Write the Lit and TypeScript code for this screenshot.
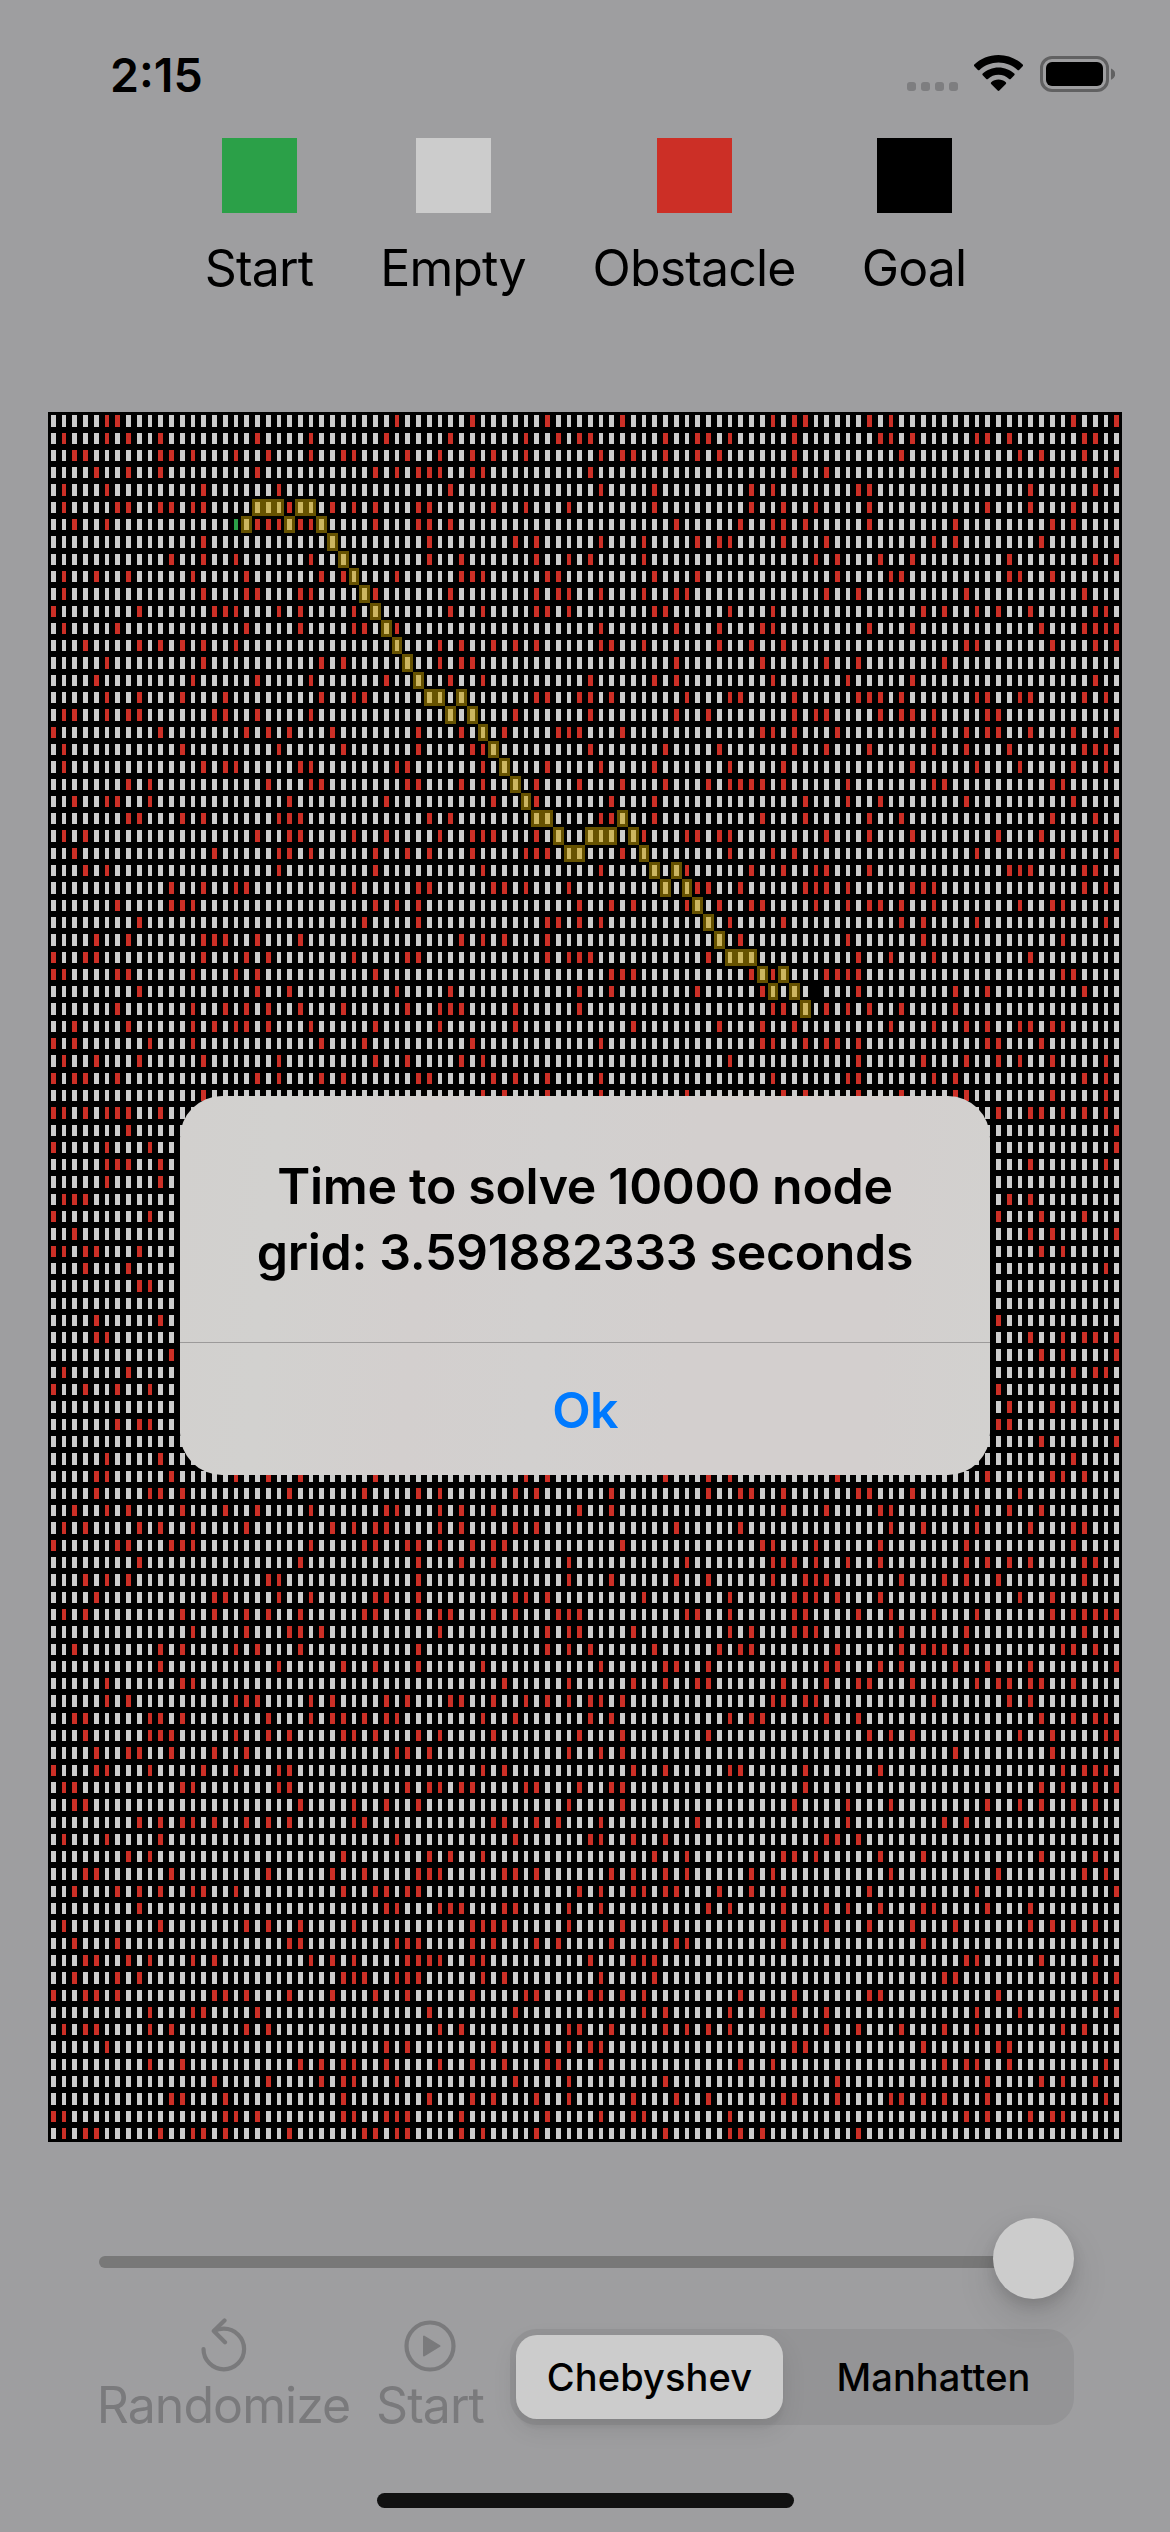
import { LitElement, html, css, svg } from "lit";
import { customElement, property } from "lit/decorators.js";

const SIZE = 100;
const PITCH_X = 10.74;
const PITCH_Y = 17.3;
const TOP_OFFSET = 0.25;
const BORDER = 3;

/* Obstacle columns, one line per grid row. */
const OBSTACLES = `5 6 32 39 46 53 67 69 70 76 78 95 99
1 5 7 10 19 24 31 37 44 47 49 50 57 60 61 63 69 77 78 80 86 87 89 96 97
2 3 10 11 13 17 20 24 27 28 33 36 39 41 44 51 53 54 57 60 62 69 79 90 92 96
4 7 10 19 30 32 34 35 36 39 40 50 69 72 99
1 5 14 21 37 51 56 65 67 75 76 91 97
1 6 7 10 11 13 14 22 26 28 30 34 35 41 44 48 56 65 68 71 76 87 91 95
2 5 19 20 21 23 24 30 34 35 37 58 64 67 68 70 76 84 93 95
14 35 43 45 51 55 60 62 63 68 72 82 84 92
11 14 17 24 35 38 45 48 50 55 71 73 77 80 89 97 99
1 4 7 13 18 25 27 32 38 39 40 46 47 56 60 73 78 79 89 90 93
1 14 18 19 23 24 30 37 45 47 48 51 55 58 59 72 75 85 96
0 8 15 16 17 21 23 28 37 40 45 46 48 56 57 63 67 81 83 86 88 91 97 98
1 6 18 23 28 29 32 51 58 62 66 67 76 80 92 96 97 98 99
3 8 10 12 14 17 36 38 41 43 45 51 52 55 62 65 68 85 86 93 97 99
5 14 25 27 36 38 39 58 66 72 75 83
4 13 19 24 31 37 40 50 56 58 67 74 80 97
5 8 12 16 25 28 29 45 46 49 50 52 59 63 64 69 75 76 77 79 86 87 90 91 96 98
1 2 5 7 8 15 16 19 24 43 50 58 61 69 71 72 77 79 80 82 87 88
0 10 18 20 22 26 34 38 42 47 48 49 53 66 67 69 73 82 85 87 88 91 95 99
1 12 21 27 34 39 40 50 57 62 69 72 76 82 85 89 96 97 98
1 14 16 17 23 24 32 33 40 46 51 56 63 68 80 86 90 95 98
7 9 20 24 25 33 34 38 40 45 49 53 57 61 63 64 65 66 68 74 82 83 93 94
2 5 6 9 22 31 41 45 52 56 70 74 77 85 95
7 8 12 14 21 22 23 35 37 51 52 56 66 70 76 79 93 97
1 3 19 22 23 28 31 36 39 40 41 45 55 59 60 62 63 72 76 80 88 92 99
2 15 21 22 24 30 33 35 39 44 45 46 53 63 67 69 86 94 99
3 5 21 30 40 51 59 65 68 71 72 76 89 90 91 96 97
11 14 17 18 28 34 35 41 42 44 48 60 61 64 70 71 72 74 80 81 82 96 98
6 11 12 13 30 32 34 49 52 54 59 62 65 66 71 74 76 77 79 82 90 93 94
8 29 34 46 47 49 51 63 68 79 81 86 98
4 7 14 15 16 19 23 38 40 42 46 64 74 81 94
0 3 4 14 18 20 28 33 34 46 48 49 50 61 75 78 82 91
0 1 6 7 13 17 19 30 52 53 54 65 67 72 73 74 75 94 95
8 19 22 32 37 49 52 60 66 75 84 87 96
6 13 16 18 20 23 27 33 36 37 38 43 49 67 68 72 74 76 79 84
2 7 13 15 17 18 20 24 30 36 43 54 62 66 69 78 82 85 87 90 91 93 94
0 2 9 13 25 29 39 51 66 67 70 72 73 75 87 88 92
1 4 8 14 21 30 33 38 40 63 75 81 85 88 90 93 98
0 2 3 6 19 21 25 27 34 35 41 43 46 51 67 74 75 82 84 96 98
14 40 42 46 51 59 68 70 75 79 84 85 93 98
0 1 3 5 6 7 10 88 91 92 94 96 98
7 99
0 5 9 99
5 6 7 10 91 98
5 10
1 2 3 89 91
0 9 88 92 96
2 91 93 99
0 1 3 4 8 92 94
3 7 98
8 9

4 10 88
4 5 91 94 96 97 99
11 92 94 99
1 7 95 97 98
0 3 6 9 88
89 93 95
6 8 9 88 89
92 99
5 10 95
4 5 11 17 20 23 30 44 46 57 61 63 73 87 93 94 96
4 9 10 12 22 29 34 36 43 45 52 61 64 65 68 75 76 80 90
2 5 7 12 16 19 24 31 32 36 38 41 49 52 68 72 77 78 86 89 92
1 3 8 10 13 18 26 28 30 31 36 38 43 45 58 64 78 81 86 91 95 96
0 6 7 11 12 13 24 29 30 33 34 36 39 41 42 53 66 67 71 77 85 95
8 23 34 38 41 48 59 67 68 69 71 74 77 85 87 89 91 96 97
3 5 7 20 21 34 48 52 58 61 67 70 71 72 79 83 85 88 96
4 15 16 21 24 30 31 34 43 44 46 55 63 69 70 71 73 77 90 93
1 3 12 15 18 20 23 29 30 34 36 37 41 43 47 48 49 59 60 63 69 70 75 78 82 86 93 95 96 97 98 99
13 18 22 23 25 36 46 48 49 54 63 65 69 70 71 79 85 96
2 10 12 17 19 23 34 46 48 50 56 62 64 65 73 79 81 82 83 85 94 95 97
10 21 27 30 34 40 51 57 58 61 72 73 77 79 84 87 91 99
5 12 13 42 48 54 57 60 61 68 72 75 76 80 86 88 89 91 92 95
5 7 17 18 19 24 26 31 33 37 38 41 44 46 48 50 51 53 67 68 70 71 82 89 91
2 3 9 10 12 20 24 26 27 29 31 32 40 43 50 52 63 65 66 72 75 92 95 97 98
3 9 10 11 17 20 22 27 28 30 34 36 41 49 53 61 76 78 80 90 93 98 99
4 7 8 11 15 18 32 33 35 48 51 53 84 93
0 4 5 9 14 17 21 22 40 42 54 57 63 64 70 77 94 96 97 98
1 2 12 13 21 22 33 35 36 38 39 44 45 49 52 53 70 92 94 97 99
2 3 23 28 31 34 48 53 69 74 78 87 90 92 95 97
8 10 12 13 15 18 20 22 28 29 41 42 45 47 51 60 74 83 85
1 5 10 32 43 50 51 54 57 72 73 75
7 9 27 35 37 40 56 59 68 69 71 77 81 92 97
3 4 11 20 26 29 34 35 36 42 43 45 52 54 57 59 65 67 78 88 96 98
2 6 8 10 13 14 17 27 30 31 33 34 49 51 54 55 57 58 62 65 68 76 86 99
8 31 32 36 37 38 42 43 48 51 61 63 68 72 74 77 81 82 87 91
1 10 18 20 23 28 39 40 41 42 48 53 57 68 72 76 80 84 91 93 95 97
2 6 22 23 32 33 34 39 41 45 47 52 58 59 68 81
3 4 7 9 13 15 24 26 28 33 34 35 36 39 40 50 54 55 56 85 86 92 97
2 6 8 27 28 29 32 33 34 40 42 51 56 83 84 97 99
0 3 4 6 15 16 18 22 26 30 33 39 44 45 50 51 53 55 64 69 76 77 88 97
9 13 14 19 35 43 55 57 63 66 69 72 86 90 99
1 3 4 9 11 18 20 36 38 48 49 52 57 59 61 63 72 75 79 83 86 94 96
5 31 33 41 46 48 50 51 69 70 81 88 89
9 12 23 25 27 28 31 36 39 42 46 47 51 64 67 83 85 86 89 98
15 20 25 27 28 32 43 48 57 73 87 92 94 97
11 12 16 27 35 39 41 45 48 54 58 61 68 69 73 78 79 81 83 87 98
0 1 16 17 19 27 28 31 32 33 38 46 51 54 55 63 85 87 91 93 94
1 3 4 10 13 14 16 22 29 30 32 33 38 40 45 57 63 64 66 75`
  .split("\n")
  .map((line) => new Set(line.split(" ").filter(Boolean).map(Number)));

/* Solved route as [row, ...columns]. */
const ROUTE: number[][] = [
  [5, 19, 20, 21, 23, 24], [6, 18, 22, 25], [7, 26], [8, 27], [9, 28], [10, 29],
  [11, 30], [12, 31], [13, 32], [14, 33], [15, 34], [16, 35, 36, 38], [17, 37, 39],
  [18, 40], [19, 41], [20, 42], [21, 43], [22, 44], [23, 45, 46, 53],
  [24, 47, 50, 51, 52, 54], [25, 48, 49, 55], [26, 56, 58], [27, 57, 59], [28, 60],
  [29, 61], [30, 62], [31, 63, 64, 65], [32, 66, 68], [33, 67, 69], [34, 70],
];
const START = [6, 17];
const GOAL = [33, 71];

const snap = (v: number) => Math.ceil(v - 0.5);

function block(row: number, col: number, inset: number): string {
  const x0 = snap(col * PITCH_X + inset);
  const x1 = snap((col + 1) * PITCH_X - inset);
  const y0 = snap(TOP_OFFSET + row * PITCH_Y + inset);
  const y1 = snap(TOP_OFFSET + (row + 1) * PITCH_Y - inset);
  return `M${x0} ${y0}H${x1}V${y1}H${x0}Z`;
}

@customElement("path-grid")
export class PathGrid extends LitElement {
  static styles = css`
    :host { display: block; width: 1074px; height: 1730px; background: #000; }
    svg { display: block; }
    .empty { fill: #cccccc; }
    .wall { fill: #cc2f26; }
    .start { fill: #2ba048; }
    .goal { fill: #000; }
    .route { fill: #665200; }
    .route-core { fill: #ccb660; }
  `;

  render() {
    const paths: Record<string, string> = { empty: "", wall: "", route: "", core: "" };
    const onRoute = new Set<number>();
    for (const [row, ...cols] of ROUTE) {
      for (const col of cols) {
        onRoute.add(row * SIZE + col);
        paths.route += block(row, col, 0);
        paths.core += block(row, col, BORDER);
      }
    }
    for (let row = 0; row < SIZE; row++) {
      for (let col = 0; col < SIZE; col++) {
        if (onRoute.has(row * SIZE + col)) continue;
        paths[OBSTACLES[row].has(col) ? "wall" : "empty"] += block(row, col, BORDER);
      }
    }
    const [startRow, startCol] = START;
    const [goalRow, goalCol] = GOAL;
    return html`<svg width="1074" height="1730" viewBox="0 0 1074 1730" shape-rendering="crispEdges">
      ${svg`
        <path class="empty" d=${paths.empty}></path>
        <path class="wall" d=${paths.wall}></path>
        <path class="route" d=${paths.route}></path>
        <path class="route-core" d=${paths.core}></path>
        <path class="start" d=${block(startRow, startCol, BORDER)}></path>
        <path class="goal" d=${block(goalRow, goalCol, BORDER)}></path>
      `}
    </svg>`;
  }
}

@customElement("status-bar")
export class StatusBar extends LitElement {
  static styles = css`
    :host {
      display: flex; align-items: flex-start; justify-content: space-between;
      height: 83px; padding: 55px 55px 0 110px;
      font-family: Inter, "Liberation Sans", sans-serif;
    }
    .time { font-size: 46.5px; font-weight: 600; line-height: 46px; letter-spacing: 0; margin-top: -3px; }
    .icons { display: flex; }
    .dots { display: flex; gap: 5px; margin: 27px 16px 0 0; }
    .dot { width: 9px; height: 9px; border-radius: 3px; background: #7e7e80; }
    .wifi { margin-right: 17px; }
    svg { display: block; }
  `;

  render() {
    return html`
      <div class="time">2:15</div>
      <div class="icons">
        <div class="dots">${[0, 1, 2, 3].map(() => html`<div class="dot"></div>`)}</div>
        <svg class="wifi" width="49" height="37" viewBox="0 0 49 37">
          <path d="M24.5 0C34 0 42.500 3.700 48.700 9.600c.45.45.45 1.150 0 1.600l-3.600 3.700c-.45.45-1.150.45-1.600 0C38.500 10.200 31.800 7.400 24.500 7.400S10.500 10.200 5.500 14.900c-.45.45-1.150.45-1.600 0L.3 11.200c-.45-.45-.45-1.150 0-1.600C6.500 3.700 15 0 24.500 0Z"/>
          <path d="M24.5 12.400c6 0 11.600 2.300 15.800 6.200.5.45.5 1.150 0 1.600l-3.600 3.700c-.45.45-1.100.45-1.600 0-2.800-2.500-6.500-4.100-10.600-4.100s-7.800 1.600-10.600 4.100c-.5.45-1.150.45-1.600 0l-3.600-3.700c-.5-.45-.5-1.150 0-1.600 4.200-3.900 9.800-6.200 15.800-6.200Z"/>
          <path d="M24.5 24.600c2.800 0 5.300 1 7.300 2.700.5.450.5 1.150.05 1.600l-6.500 6.700c-.45.5-1.250.5-1.700 0l-6.500-6.700c-.45-.45-.45-1.150.05-1.600 2-1.700 4.500-2.700 7.300-2.700Z"/>
        </svg>
        <svg width="75" height="38" viewBox="0 0 75 38">
          <rect x="1.500" y="2.500" width="66" height="33" rx="10.500" fill="none" stroke="#616162" stroke-width="3"/>
          <rect x="6" y="7" width="57" height="24" rx="6"/>
          <path d="M71 13.500c2.500 1 4.200 3 4.200 5.600s-1.700 4.600-4.200 5.600Z" fill="#616162"/>
        </svg>
      </div>
    `;
  }
}

@customElement("grid-legend")
export class GridLegend extends LitElement {
  static styles = css`
    :host {
      display: flex; gap: 66px; justify-content: center; height: 274px;
      font-family: Inter, "Liberation Sans", sans-serif;
    }
    .item { display: flex; flex-direction: column; align-items: center; }
    .swatch { width: 75px; height: 75px; }
    .label { margin-top: 25px; font-size: 50px; line-height: 60px; letter-spacing: -0.85px; white-space: nowrap; }
    .start { width: 110px; }
    .empty { width: 146px; }
    .obstacle { width: 204px; }
    .goal { width: 104px; }
    .start .swatch { background: #2ba048; }
    .empty .swatch { background: #cccccc; }
    .obstacle .swatch { background: #cc2f26; }
    .goal .swatch { background: #000; }
  `;

  render() {
    return ["Start", "Empty", "Obstacle", "Goal"].map(
      (name) => html`<div class="item ${name.toLowerCase()}">
        <div class="swatch"></div>
        <div class="label">${name}</div>
      </div>`,
    );
  }
}

@customElement("alert-dialog")
export class AlertDialog extends LitElement {
  @property() message = "";

  static styles = css`
    :host {
      display: flex; flex-direction: column; width: 810px; height: 379px;
      border-radius: 42px; overflow: hidden; text-align: center;
      font-family: Inter, "Liberation Sans", sans-serif; font-weight: 600;
      background: linear-gradient(95deg, #d2d0ce 0%, #d2d1cf 12%, #d3cfce 30%, #d2d0cf 45%, #d3cfce 62%, #d3cfce 85%, #d2d1cf 100%);
    }
    .message {
      flex: 1; padding-top: 57px; white-space: pre-line;
      font-size: 50px; line-height: 66px; letter-spacing: -0.32px;
    }
    .action {
      height: 132px; border-top: 1px solid #9c9a9a; line-height: 134px;
      font-size: 50px; letter-spacing: -0.6px; color: #007aff;
    }
  `;

  render() {
    return html`<div class="message">${this.message}</div><div class="action">Ok</div>`;
  }
}

@customElement("app-root")
export class AppRoot extends LitElement {
  static styles = css`
    :host {
      display: flex; flex-direction: column; position: relative;
      width: 1170px; height: 2532px; overflow: hidden;
      background: #9e9ea0; color: #000;
      font-family: Inter, "Liberation Sans", sans-serif;
    }
    status-bar, grid-legend, path-grid { box-sizing: border-box; flex: none; }
    status-bar { height: 138px; }
    path-grid { margin-left: 48px; }
    alert-dialog { position: absolute; left: 180px; top: 1096px; }
    .slider {
      display: flex; align-items: center; justify-content: flex-end;
      width: 975px; height: 81px; margin: 76px 0 0 99px;
    }
    .track { flex: 1; height: 12px; margin: 7px -20px 0 0; border-radius: 6px; background: #787878; }
    .thumb {
      position: relative; width: 81px; height: 81px; border-radius: 50%; background: #cccccc;
      box-shadow: 0 18px 39px rgba(0, 0, 0, 0.12), 0 6px 14px rgba(0, 0, 0, 0.12);
    }
    .controls { display: flex; align-items: flex-start; height: 194px; padding: 19px 96px 0 99px; box-sizing: border-box; }
    .button { display: flex; flex-direction: column; align-items: center; color: #7a7a7c; }
    .button svg { display: block; fill: none; stroke: #7a7a7c; stroke-width: 4.2; stroke-linecap: round; stroke-linejoin: round; }
    .button .solid { fill: #7a7a7c; stroke-width: 2; }
    .caption { margin-top: 1px; font-size: 50px; line-height: 60px; letter-spacing: -0.95px; white-space: nowrap; }
    .randomize { width: 249px; }
    .run { width: 110px; margin-left: 27px; }
    .segments {
      display: flex; box-sizing: border-box; width: 564px; height: 96px; margin: 11px 0 0 25px; padding: 6px;
      border-radius: 27px; background: #949496;
      font-size: 38px; font-weight: 500; letter-spacing: 0.1px; text-align: center; line-height: 85px;
    }
    .segment { flex: 1; height: 84px; padding-left: 16px; }
    .segment.selected {
      flex: none; width: 267px; padding: 0; border-radius: 21px; background: #cccccc;
      box-shadow: 0 9px 24px rgba(0, 0, 0, 0.1), 0 9px 3px rgba(0, 0, 0, 0.03);
    }
    .home { width: 417px; height: 15px; border-radius: 8px; margin-left: 377px; background: #111; }
  `;

  render() {
    return html`
      <status-bar></status-bar>
      <grid-legend></grid-legend>
      <path-grid></path-grid>
      <div class="slider">
        <div class="track"></div>
        <div class="thumb"></div>
      </div>
      <div class="controls">
        <div class="button randomize">
          <svg width="50" height="56" viewBox="0 0 50 56">
            <path d="M4.500 31a20.300 20.300 0 1 0 20.300-20.300c-3.200 0-6.300.5-9.300 1.900"/>
            <path d="M25.500 2.500L14.800 13.100L26 24.200"/>
          </svg>
          <div class="caption">Randomize</div>
        </div>
        <div class="button run">
          <svg width="56" height="56" viewBox="0 0 56 56">
            <circle cx="28" cy="28" r="23.500"/>
            <path class="solid" d="M22 18.500v19l15.500-9.500Z"/>
          </svg>
          <div class="caption">Start</div>
        </div>
        <div class="segments">
          <div class="segment selected">Chebyshev</div>
          <div class="segment">Manhatten</div>
        </div>
      </div>
      <div class="home"></div>
      <alert-dialog .message=${"Time to solve 10000 node\ngrid: 3.591882333 seconds"}></alert-dialog>
    `;
  }
}
